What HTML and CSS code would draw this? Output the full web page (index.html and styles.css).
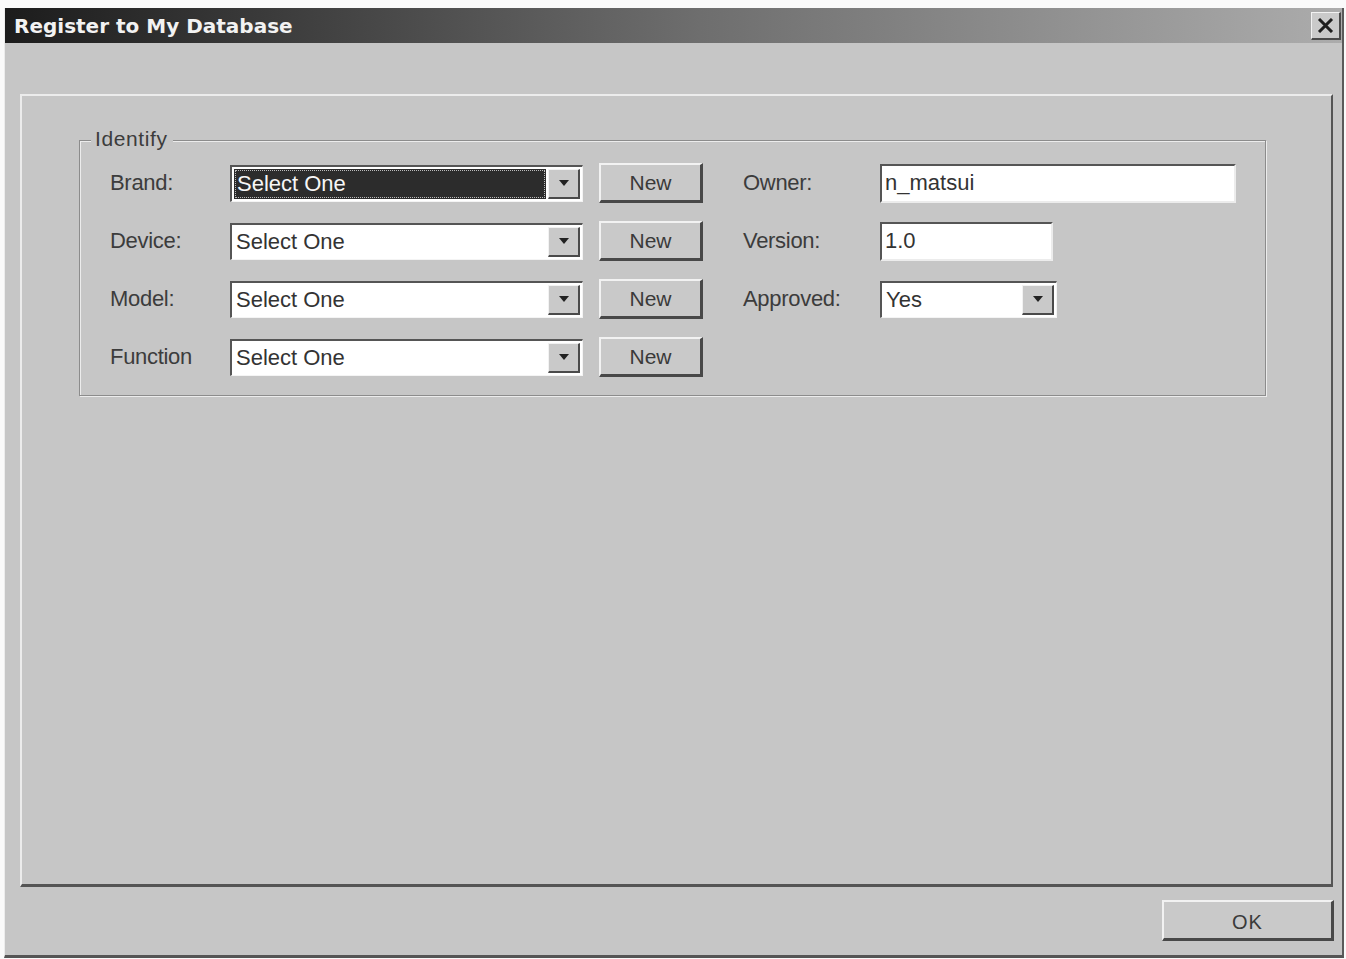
FILE: index.html
```html
<!DOCTYPE html>
<html>

<head>
    <meta charset="UTF-8">
    <title>Register to My Database</title>
    <link rel="stylesheet" href="styles.css">
</head>

<body>

<div class="window">
    <div class="titlebar">
        <span class="title">Register to My Database</span>
        <a href="javascript:;" class="close">
            <svg width="17" height="15" viewBox="0 0 17 15"><path d="M2 1 L15 14 M15 1 L2 14" stroke="#1e1e1e" stroke-width="3"/></svg>
        </a>
    </div>
    <div class="content">
        <div class="panel">
            <div class="group">
                <span class="legend">Identify</span>
                <div class="grid">
                    <label class="label">Brand:</label>
                    <div class="combo wide focus"><span class="field"><span class="ring">Select One</span></span><span class="drop"></span></div>
                    <a href="javascript:;" class="btn new">New</a>
                    <label class="label">Owner:</label>
                    <div class="text owner">n_matsui</div>

                    <label class="label">Device:</label>
                    <div class="combo wide"><span class="field">Select One</span><span class="drop"></span></div>
                    <a href="javascript:;" class="btn new">New</a>
                    <label class="label">Version:</label>
                    <div class="text version">1.0</div>

                    <label class="label">Model:</label>
                    <div class="combo wide"><span class="field">Select One</span><span class="drop"></span></div>
                    <a href="javascript:;" class="btn new">New</a>
                    <label class="label">Approved:</label>
                    <div class="combo small"><span class="field">Yes</span><span class="drop"></span></div>

                    <label class="label">Function</label>
                    <div class="combo wide"><span class="field">Select One</span><span class="drop"></span></div>
                    <a href="javascript:;" class="btn new">New</a>
                </div>
            </div>
        </div>
        <div class="footer">
            <a href="javascript:;" class="btn ok">OK</a>
        </div>
    </div>
</div>

</body>

</html>
```

FILE: styles.css
```css
* {
    margin: 0;
    padding: 0;
    box-sizing: border-box;
    text-decoration: none;
}
body {
    background: #fafafa;
    font-family: "Liberation Sans", Arial, sans-serif;
    color: #3a3a3a;
}
.window {
    margin: 8px 0 0 4px;
    width: 1340px;
    height: 950px;
    background: #c6c6c6;
    border-left: 1px solid #ececec;
    border-right: 2px solid #5a5a5a;
    border-bottom: 3px solid #555;
}
.titlebar {
    height: 35px;
    display: flex;
    align-items: center;
    justify-content: space-between;
    padding: 0 1px 0 9px;
    background: linear-gradient(to right, #1c1c1c, #6e6e6e 52%, #acacac);
}
.title {
    font-family: "DejaVu Sans", Verdana, sans-serif;
    font-weight: bold;
    font-size: 20px;
    color: #f2f2f2;
}
.close {
    width: 30px;
    height: 28px;
    display: flex;
    align-items: center;
    justify-content: center;
    background: #cacaca;
    border-top: 1px solid #f2f2f2;
    border-left: 1px solid #f2f2f2;
    border-right: 2px solid #4a4a4a;
    border-bottom: 2px solid #4a4a4a;
}
.content {
    padding: 51px 9px 0 15px;
}
.panel {
    height: 793px;
    border-top: 2px solid #ececec;
    border-left: 2px solid #ececec;
    border-right: 2px solid #555;
    border-bottom: 3px solid #555;
    padding: 44px 0 0 57px;
}
.group {
    position: relative;
    width: 1187px;
    height: 256px;
    border: 1px solid #8c8c8c;
    box-shadow: inset 1px 1px 0 #ececec, 1px 1px 0 #ececec;
    padding: 22px 0 0 30px;
}
.legend {
    position: absolute;
    top: -14px;
    left: 11px;
    padding: 0 5px 0 4px;
    background: #c6c6c6;
    font-size: 21px;
    letter-spacing: 0.6px;
    color: #3c3c3c;
}
.grid {
    display: grid;
    grid-template-columns: 120px 369px 144px 137px 1fr;
    grid-auto-rows: 40px;
    row-gap: 18px;
    align-items: center;
}
.label {
    font-size: 22px;
    color: #3c3c3c;
    letter-spacing: -0.3px;
}
.combo {
    height: 37px;
    display: flex;
    background: #fff;
    border-top: 2px solid #555;
    border-left: 2px solid #555;
    border-right: 1px solid #f4f4f4;
    border-bottom: 1px solid #f4f4f4;
    padding: 2px;
}
.combo.wide {
    width: 353px;
}
.combo.small {
    width: 177px;
}
.field {
    flex: 1;
    display: flex;
    align-items: center;
    padding-left: 2px;
    font-size: 22px;
    color: #333;
}
.focus .field {
    background: #2c2c2c;
    color: #f6f6f6;
    padding: 1px;
}
.ring {
    flex: 1;
    height: 100%;
    display: flex;
    align-items: center;
    padding-left: 1px;
    border: 1px dotted #bbb;
}
.drop {
    position: relative;
    width: 32px;
    background: #c9c9c9;
    border-top: 1px solid #f2f2f2;
    border-left: 1px solid #f2f2f2;
    border-right: 2px solid #4a4a4a;
    border-bottom: 2px solid #4a4a4a;
    margin-left: 2px;
}
.drop::after {
    content: "";
    position: absolute;
    left: 50%;
    top: 50%;
    margin: -3px 0 0 -5px;
    border-left: 5px solid transparent;
    border-right: 5px solid transparent;
    border-top: 6px solid #222;
}
.btn {
    display: flex;
    align-items: center;
    justify-content: center;
    background: #c9c9c9;
    border-top: 2px solid #f2f2f2;
    border-left: 2px solid #f2f2f2;
    border-right: 3px solid #484848;
    border-bottom: 3px solid #484848;
    font-size: 21px;
    color: #3a3a3a;
}
.new {
    width: 104px;
    height: 40px;
}
.text {
    height: 39px;
    display: flex;
    align-items: center;
    padding-left: 3px;
    background: #fff;
    border-top: 2px solid #555;
    border-left: 2px solid #555;
    border-right: 2px solid #ececec;
    border-bottom: 2px solid #ececec;
    font-size: 22px;
    color: #333;
}
.owner {
    width: 356px;
}
.version {
    width: 173px;
}
.footer {
    display: flex;
    justify-content: flex-end;
    padding: 13px 0 0 0;
}
.ok {
    width: 172px;
    height: 41px;
    margin-right: -1px;
    padding-top: 4px;
    font-size: 20px;
    letter-spacing: 1px;
}
```
